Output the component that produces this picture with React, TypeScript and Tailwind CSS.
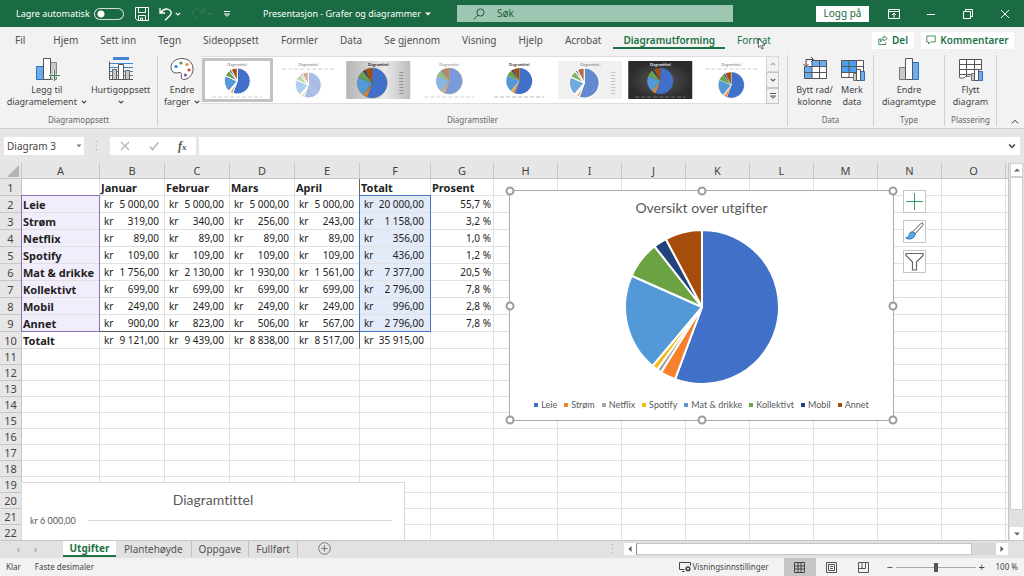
import type { ReactNode } from "react";
import clsx from "clsx";

const SLICES = [
  { name: "Leie", value: 20000, color: "#4170c8" },
  { name: "Strøm", value: 1158, color: "#f5812c" },
  { name: "Netflix", value: 356, color: "#a5a5a5" },
  { name: "Spotify", value: 436, color: "#f4bc10" },
  { name: "Mat & drikke", value: 7377, color: "#5399d8" },
  { name: "Kollektivt", value: 2796, color: "#6ba342" },
  { name: "Mobil", value: 996, color: "#24427a" },
  { name: "Annet", value: 2796, color: "#a74d0c" },
];

const COLUMNS = "ABCDEFGHIJKLMNO".split("");

const ROWS: string[][] = [
  ["", "Januar", "Februar", "Mars", "April", "Totalt", "Prosent"],
  ["Leie", "5 000,00", "5 000,00", "5 000,00", "5 000,00", "20 000,00", "55,7 %"],
  ["Strøm", "319,00", "340,00", "256,00", "243,00", "1 158,00", "3,2 %"],
  ["Netflix", "89,00", "89,00", "89,00", "89,00", "356,00", "1,0 %"],
  ["Spotify", "109,00", "109,00", "109,00", "109,00", "436,00", "1,2 %"],
  ["Mat & drikke", "1 756,00", "2 130,00", "1 930,00", "1 561,00", "7 377,00", "20,5 %"],
  ["Kollektivt", "699,00", "699,00", "699,00", "699,00", "2 796,00", "7,8 %"],
  ["Mobil", "249,00", "249,00", "249,00", "249,00", "996,00", "2,8 %"],
  ["Annet", "900,00", "823,00", "506,00", "567,00", "2 796,00", "7,8 %"],
  ["Totalt", "9 121,00", "9 439,00", "8 838,00", "8 517,00", "35 915,00", ""],
];

const TABS = [
  "Fil", "Hjem", "Sett inn", "Tegn", "Sideoppsett", "Formler", "Data",
  "Se gjennom", "Visning", "Hjelp", "Acrobat", "Diagramutforming", "Format",
];

type PieProps = {
  cx: number;
  cy: number;
  r: number;
  gap: string;
  gapWidth: number;
  opacity?: number;
};

function Pie({ cx, cy, r, gap, gapWidth, opacity = 1 }: PieProps) {
  const total = SLICES.reduce((sum, s) => sum + s.value, 0);
  let angle = -Math.PI / 2;
  return (
    <g opacity={opacity} stroke={gap} strokeWidth={gapWidth} strokeLinejoin="round">
      {SLICES.map((s) => {
        const end = angle + (s.value / total) * Math.PI * 2;
        const large = end - angle > Math.PI ? 1 : 0;
        const d = `M${cx} ${cy}L${cx + r * Math.cos(angle)} ${cy + r * Math.sin(angle)}A${r} ${r} 0 ${large} 1 ${cx + r * Math.cos(end)} ${cy + r * Math.sin(end)}Z`;
        angle = end;
        return <path key={s.name} d={d} fill={s.color} />;
      })}
    </g>
  );
}

function Chevron({ className }: { className?: string }) {
  return (
    <svg viewBox="0 0 6 4" className={clsx("inline-block h-1 w-1.5", className)} fill="none" stroke="currentColor" strokeWidth="1.2">
      <path d="M.8.8 3 3 5.2.8" />
    </svg>
  );
}

function TitleBar() {
  return (
    <header className="flex h-[27px] shrink-0 items-center bg-[#1a6b43] text-[10px] text-white">
      <div className="flex w-[457px] shrink-0 items-center pl-4">
        <label htmlFor="autosave" className="w-[78px] whitespace-nowrap text-[9px]">Lagre automatisk</label>
        <input
          id="autosave"
          type="checkbox"
          className="h-3 w-[30px] appearance-none rounded-full border border-white/80 bg-[radial-gradient(circle_at_6px_5px,white_3px,transparent_4px)]"
        />
        <button aria-label="Lagre" className="ml-[11px]">
          <svg viewBox="0 0 14 14" className="h-3.5 w-3.5" fill="none" stroke="currentColor">
            <path d="M.5.5h13v13h-11l-2-2zM3.5.5v5h7v-5M3.5 13.5v-5h7v5M5.5 13.5v-2.500h2v2.500" />
          </svg>
        </button>
        <button aria-label="Angre" className="ml-2.5">
          <svg viewBox="0 0 14 14" className="h-3.5 w-3.5" fill="none" stroke="currentColor" strokeWidth="1.3">
            <path d="M1 1v5h5M1.300 5.800C4 2.500 7 1.300 9.800 2.500c2.700 1.200 3 4 1.200 6L6 13.300" />
          </svg>
        </button>
        <Chevron className="ml-0.5" />
        <button aria-label="Gjør om" className="ml-2.5 text-[#3a7f58]">
          <svg viewBox="0 0 14 14" className="h-3.5 w-3.5" fill="none" stroke="currentColor">
            <path d="M13 1v5H8M12.700 5.800C10 2.500 7 1.300 4.200 2.500 1.500 3.700 1.200 6.500 3 8.500l4 4" />
          </svg>
        </button>
        <Chevron className="ml-0.5 text-[#3a7f58]" />
        <button aria-label="Tilpass" className="ml-2.5">
          <svg viewBox="0 0 8 8" className="h-2 w-2" fill="none" stroke="currentColor">
            <path d="M1 1.500h6M1.500 4h5L4 6.300z" />
          </svg>
        </button>
        <h1 className="ml-8 whitespace-nowrap text-[9px]">Presentasjon - Grafer og diagrammer</h1>
        <svg viewBox="0 0 6 4" className="ml-1 h-1 w-1.5" fill="currentColor">
          <path d="M0 .5h6L3 3.500z" />
        </svg>
      </div>
      <div className="flex h-[17px] w-[276px] items-center bg-[#9dc7b2] pl-4 text-[#1a5c3a]">
        <svg viewBox="0 0 12 12" className="h-3 w-3" fill="none" stroke="currentColor">
          <circle cx="7.500" cy="4.500" r="3.600" />
          <path d="M5 7.200.8 11.400" />
        </svg>
        <input aria-label="Søk" placeholder="Søk" className="ml-3 min-w-0 flex-1 bg-transparent outline-none placeholder:text-[#1f5f3e]" />
      </div>
      <div className="ml-auto flex items-center">
        <button className="h-4 w-[53px] bg-white text-[#1a6b43]">Logg på</button>
        <button aria-label="Båndvisning" className="ml-[19px]">
          <svg viewBox="0 0 12 10" className="h-2.5 w-3" fill="none" stroke="currentColor">
            <path d="M.5.5h11v9H.5zM.5 2.500h11M6 8.500V4.300M4 6l2-2 2 2" />
          </svg>
        </button>
        <button aria-label="Minimer" className="ml-[26px]">
          <svg viewBox="0 0 10 10" className="h-2.5 w-2.5" stroke="currentColor"><path d="M1 5.500h8" /></svg>
        </button>
        <button aria-label="Gjenopprett" className="ml-[27px]">
          <svg viewBox="0 0 10 10" className="h-2.5 w-2.5" fill="none" stroke="currentColor">
            <path d="M.5 2.500h7v7h-7zM2.500 2.500v-2h7v7h-2" />
          </svg>
        </button>
        <button aria-label="Lukk" className="ml-[27px] mr-3.5">
          <svg viewBox="0 0 10 10" className="h-2.5 w-2.5" stroke="currentColor"><path d="m1 1 8 8M9 1 1 9" /></svg>
        </button>
      </div>
    </header>
  );
}

function RibbonTabs() {
  return (
    <nav className="flex h-[26px] shrink-0 items-center pl-[15px] text-[10px] text-[#505050]">
      <div className="flex h-full gap-[22px]">
        {TABS.map((tab) => (
          <button
            key={tab}
            className={clsx(
              "relative flex h-full items-center whitespace-nowrap",
              tab === "Fil" && "mr-1.5",
              tab === "Diagramutforming" && "font-semibold text-[#217346]",
              tab === "Format" && "text-[#217346]"
            )}
          >
            {tab}
            {tab === "Diagramutforming" && <span className="absolute -inset-x-2.5 bottom-1 h-0.5 bg-[#217346]" />}
            {tab === "Format" && (
              <svg viewBox="0 0 8 12" className="absolute left-[21px] top-[11px] h-3 w-2" fill="white" stroke="#444" strokeWidth=".8">
                <path d="M.5.5v9l2-1.800 1.400 3.300 1.400-.6L4 7.200h3z" />
              </svg>
            )}
          </button>
        ))}
      </div>
      <div className="ml-auto mr-2.5 flex gap-[7px] font-semibold text-[#217346]">
        <button className="flex h-[17px] w-[42px] items-center justify-center gap-1 bg-white">
          <svg viewBox="0 0 10 10" className="h-2.5 w-2.5" fill="none" stroke="currentColor" strokeWidth=".8">
            <path d="M3 4H.8v5.500h7V7.300M6 1l3.300 2.500L6 6V4.600C4 4.600 3 5.400 2.600 7 2.600 4.300 3.800 2.700 6 2.500z" />
          </svg>
          Del
        </button>
        <button className="flex h-[17px] w-[93px] items-center justify-center gap-1 bg-white">
          <svg viewBox="0 0 10 10" className="h-2.5 w-2.5" fill="none" stroke="currentColor" strokeWidth=".8">
            <path d="M.8 1h8.400v6H4.500L2.500 9V7H.8z" />
          </svg>
          Kommentarer
        </button>
      </div>
    </nav>
  );
}

function Group({ label, className, children }: { label: string; className?: string; children: ReactNode }) {
  return (
    <section className={clsx("flex flex-col border-r border-[#d0d0d0]", className)}>
      <div className="flex flex-1 items-start justify-center">{children}</div>
      <h2 className="h-3 text-center text-[8px] leading-3 text-[#666]">{label}</h2>
    </section>
  );
}

function BigButton({ icon, lines, menu, className }: { icon: ReactNode; lines: string[]; menu?: boolean; className?: string }) {
  return (
    <button className={clsx("flex shrink-0 flex-col items-center pt-px text-[9px] leading-3 whitespace-nowrap text-[#444]", className)}>
      <svg viewBox="0 0 26 26" className="mb-0.5 h-[26px] w-[26px]" fill="none">{icon}</svg>
      {lines.map((line, i) => (
        <span key={i} className="flex h-3 items-center">
          {line}
          {menu && i === lines.length - 1 && <Chevron className={line ? "ml-1" : ""} />}
        </span>
      ))}
    </button>
  );
}

const barsIcon = (
  <g strokeWidth="1">
    <path d="M3.500 11.500h6v12h-6z" fill="#c8c8c8" stroke="#777" />
    <path d="M16.500 6.500h6v17h-6z" fill="#6aaef0" stroke="#2d6fb5" />
    <path d="M9.500 2.500h7v21h-7z" fill="#fff" stroke="#555" />
  </g>
);

const addElementIcon = (
  <g>
    <path d="M2.500 10.500h7v13h-7z" fill="#6aaef0" stroke="#2d6fb5" />
    <path d="M16.500 6.500h6v17h-6z" fill="#c8c8c8" stroke="#888" />
    <path d="M9.500 2.500h7v21h-7z" fill="#fff" stroke="#555" />
    <path d="M20 14v11M14.500 19.500h11" stroke="#f1f1f1" strokeWidth="2" />
    <path d="M20.500 14v11M15 19.500h11" stroke="#2e8b57" />
  </g>
);

const quickLayoutIcon = (
  <g>
    <path d="M5 1h16v3H5z" fill="#3f87d0" />
    <path d="M1 7.500h24M1 11.500h24M1 15.500h24M1 19.500h24" stroke="#3f87d0" />
    <path d="M4.500 13.500h4v10h-4z" fill="#c8c8c8" stroke="#666" />
    <path d="M10.500 8.500h5v15h-5z" fill="#fff" stroke="#555" />
    <path d="M17.500 14.500h4v9h-4z" fill="#c8c8c8" stroke="#666" />
    <path d="M1.500 5.500v18H25" stroke="#555" />
  </g>
);

const paletteIcon = (
  <g>
    <path
      d="M13 2.500C6.500 2.500 2 6.500 2 11.500c0 3.500 2.500 5.500 5 5.500 2.200 0 4-1.300 5.200.2 1.200 1.600-.6 3.200.2 5 .7 1.500 3.300 1.700 5.600.5 3.800-1.900 6-5.700 6-9.700C24 6.500 19 2.500 13 2.500Z"
      fill="#fff"
      stroke="#555"
    />
    <circle cx="7" cy="10.500" r="1.600" fill="#2f7fd4" />
    <circle cx="12" cy="7" r="1.600" fill="#4a9a4a" />
    <circle cx="18" cy="8.500" r="1.600" fill="#ea8a2e" />
    <circle cx="20" cy="14" r="1.600" fill="#d8402f" />
    <circle cx="16.500" cy="19" r="1.600" fill="#8a4fb5" />
  </g>
);

const switchIcon = (
  <g>
    <path d="M2.500 4.500h22v18h-22z" fill="#fff" />
    <path d="M10 4.500h14.500v6H10zM2.500 10.500H10v12H2.500z" fill="#6aaef0" />
    <path d="M10 4.500h14.500v18h-22v-12H24.500M2.500 16.500h22M10 4.500v18M17.500 4.500v18" stroke="#555" />
    <path d="M4 10.500V3.500h7" stroke="#f1f1f1" strokeWidth="3" />
    <path d="M4 10.500V3.500h7M9 1l2.500 2.500L9 6M1.500 8 4 10.500 6.500 8" stroke="#444" />
  </g>
);

const selectDataIcon = (
  <g>
    <path d="M2.500 4.500h22v17h-22z" fill="#fff" />
    <path d="M2.500 4.500h15v12h-15z" fill="#4d9df0" />
    <path d="M2.500 4.500h22v17h-22zM2.500 10.500h22M2.500 16.500h22M10 4.500v17M17.500 4.500v17" stroke="#555" />
    <path d="M14.500 17.500h4v7h-4z" fill="#c8c8c8" stroke="#777" />
    <path d="M21.500 15.500h4v9h-4z" fill="#6aaef0" stroke="#2d6fb5" />
    <path d="M17.500 13.500h4v11h-4z" fill="#fff" stroke="#555" />
  </g>
);

const moveChartIcon = (
  <g>
    <path d="M2.500 3.500h22v19H8l-5.500-1z" fill="#fff" />
    <path d="M24.500 14v-10.500h-22v18c2 1 5 1 6-1l5-.3M2.500 8.500h22M2.500 13.500h22M2.500 18.500h12M9.500 3.500v17M17.500 3.500v10" stroke="#555" />
    <path d="M14.500 17.500h4v7h-4z" fill="#c8c8c8" stroke="#777" />
    <path d="M21.500 15.500h4v9h-4z" fill="#6aaef0" stroke="#2d6fb5" />
    <path d="M17.500 13.500h4v11h-4z" fill="#fff" stroke="#555" />
  </g>
);

type ThumbStyle = {
  bg: string;
  ink: string;
  cx: number;
  cy: number;
  r: number;
  gap: string;
  gapWidth: number;
  opacity?: number;
  bold?: boolean;
  legend: "bottom" | "top" | "right";
};

const THUMBS: ThumbStyle[] = [
  { bg: "#fff", ink: "#777", cx: 32, cy: 20, r: 13, gap: "#fff", gapWidth: 1, legend: "bottom" },
  { bg: "#fff", ink: "#777", cx: 32, cy: 24, r: 13, gap: "#fff", gapWidth: 1, opacity: 0.6, legend: "top" },
  { bg: "url(#silver)", ink: "#222", cx: 26, cy: 22, r: 15, gap: "#555", gapWidth: 0.3, bold: true, legend: "right" },
  { bg: "#fff", ink: "#888", cx: 32, cy: 20, r: 13, gap: "#777", gapWidth: 0.5, opacity: 0.7, legend: "bottom" },
  { bg: "#fff", ink: "#333", cx: 32, cy: 20, r: 13, gap: "#3a66b8", gapWidth: 0, bold: true, legend: "bottom" },
  { bg: "#f0f0f0", ink: "#777", cx: 26, cy: 22, r: 15, gap: "#fff", gapWidth: 1.2, opacity: 0.8, legend: "right" },
  { bg: "url(#coal)", ink: "#eee", cx: 32, cy: 20, r: 13, gap: "#2c58b0", gapWidth: 0, bold: true, legend: "bottom" },
  { bg: "#fff", ink: "#777", cx: 32, cy: 24, r: 13, gap: "#fff", gapWidth: 0.3, legend: "top" },
];

const LEGEND_LINES = {
  bottom: "M7 36h50",
  top: "M6 8h54",
  right: "M55 11v22",
};

function StyleThumb({ t, index }: { t: ThumbStyle; index: number }) {
  return (
    <button
      aria-label={`Stil ${index + 1}`}
      className={clsx("h-11 min-w-0 flex-1 border-[3px]", index === 0 ? "border-[#c3c3c3]" : "border-transparent")}
    >
      <svg viewBox="0 0 64 38" className="h-full w-full">
        <rect width="64" height="39" fill={t.bg} />
        <text
          x="32"
          y="4.500"
          textAnchor="middle"
          fontSize="3.500"
          fontFamily="Lato, sans-serif"
          fontWeight={t.bold ? 700 : 400}
          fill={t.ink}
        >
          Diagramtittel
        </text>
        <Pie cx={t.cx} cy={t.cy} r={t.r} gap={t.gap} gapWidth={t.gapWidth} opacity={t.opacity} />
        <path
          d={LEGEND_LINES[t.legend]}
          stroke={t.ink}
          strokeWidth={t.legend === "right" ? 4 : 1}
          strokeDasharray={t.legend === "right" ? "1 2" : "4 2"}
          opacity=".35"
        />
        {index === 1 && <circle cx={t.cx} cy={t.cy} r={t.r} fill="url(#hatch)" />}
      </svg>
    </button>
  );
}

function Ribbon() {
  return (
    <div className="flex h-[76px] shrink-0 border-b border-[#cfcfcf] py-0.5">
      <svg className="absolute h-0 w-0">
        <defs>
          <linearGradient id="silver">
            <stop offset="0" stopColor="#b5b5b5" />
            <stop offset=".6" stopColor="#e8e8e8" />
            <stop offset="1" stopColor="#bdbdbd" />
          </linearGradient>
          <radialGradient id="coal">
            <stop offset="0" stopColor="#5a5a5a" />
            <stop offset="1" stopColor="#2b2b2b" />
          </radialGradient>
          <pattern id="hatch" width="2" height="2" patternUnits="userSpaceOnUse" patternTransform="rotate(45)">
            <path d="M0 0h2" stroke="#fff" strokeWidth="1.200" />
          </pattern>
        </defs>
      </svg>
      <Group label="Diagramoppsett" className="w-[158px]">
        <BigButton icon={addElementIcon} lines={["Legg til", "diagramelement"]} menu />
        <BigButton icon={quickLayoutIcon} lines={["Hurtigoppsett", ""]} menu className="ml-1" />
      </Group>
      <Group label="Diagramstiler" className="flex-1">
        <BigButton icon={paletteIcon} lines={["Endre", "farger"]} menu className="w-11 pl-1" />
        <div className="mt-px flex h-[48px] min-w-0 flex-1 items-center border-y border-[#dedede] bg-white">
          {THUMBS.map((t, i) => (
            <StyleThumb key={i} t={t} index={i} />
          ))}
        </div>
        <div className="mr-2 mt-px flex h-[48px] w-[13px] flex-col text-[#555]">
          <button aria-label="Forrige stiler" className="flex flex-1 items-center justify-center border border-[#d8d8d8] text-[#aaa]">
            <Chevron className="rotate-180" />
          </button>
          <button aria-label="Neste stiler" className="flex flex-1 items-center justify-center border border-[#c6c6c6]">
            <Chevron />
          </button>
          <button aria-label="Flere stiler" className="flex flex-1 items-center justify-center border border-[#c6c6c6]">
            <svg viewBox="0 0 8 8" className="h-2 w-2" fill="none" stroke="currentColor">
              <path d="M1 1.500h6M1.500 4h5L4 6.300z" />
            </svg>
          </button>
        </div>
      </Group>
      <Group label="Data" className="w-[86px]">
        <BigButton icon={switchIcon} lines={["Bytt rad/", "kolonne"]} />
        <BigButton icon={selectDataIcon} lines={["Merk", "data"]} className="ml-1.5" />
      </Group>
      <Group label="Type" className="w-[71px]">
        <BigButton icon={barsIcon} lines={["Endre", "diagramtype"]} />
      </Group>
      <Group label="Plassering" className="w-[52px]">
        <BigButton icon={moveChartIcon} lines={["Flytt", "diagram"]} />
      </Group>
      <button aria-label="Skjul båndet" className="flex w-[27px] items-end justify-center pb-0.5 pl-2 text-[#444]">
        <svg viewBox="0 0 8 5" className="h-[5px] w-2" fill="none" stroke="currentColor"><path d="m.8 4.300 3.200-3 3.200 3" /></svg>
      </button>
    </div>
  );
}

function FormulaBar() {
  return (
    <div className="flex h-[34px] shrink-0 items-start bg-[#e6e6e6] px-1 pt-2 text-[10px] text-[#444]">
      <div className="flex h-[18px] w-20 items-center bg-white pl-[3px]">
        <input aria-label="Navneboks" defaultValue="Diagram 3" className="min-w-0 flex-1 bg-transparent outline-none" />
        <button aria-label="Vis navn" className="px-0.5">
          <svg viewBox="0 0 6 4" className="h-1 w-1.5" fill="#777"><path d="M.5.5h5L3 3.200z" /></svg>
        </button>
      </div>
      <svg viewBox="0 0 2 10" className="mx-3 mt-1 h-2.5 w-0.5 fill-[#aaa]">
        <path d="M0 0h1v1H0zM0 4h1v1H0zM0 8h1v1H0z" />
      </svg>
      <div className="flex h-[18px] w-[86px] items-center justify-around bg-white text-[#b5b5b5]">
        <button aria-label="Avbryt">
          <svg viewBox="0 0 10 10" className="h-2.5 w-2.5" stroke="currentColor" strokeWidth="1.200"><path d="m1 1 8 8M9 1 1 9" /></svg>
        </button>
        <button aria-label="Angi">
          <svg viewBox="0 0 10 10" className="h-2.5 w-2.5" fill="none" stroke="currentColor" strokeWidth="1.500"><path d="m.8 5.500 2.700 3L9.300 1.500" /></svg>
        </button>
        <button aria-label="Sett inn funksjon" className="font-['Liberation_Serif',serif] text-xs font-bold italic text-[#555]">
          f<span className="text-[9px]">x</span>
        </button>
      </div>
      <div className="ml-[3px] flex h-[18px] flex-1 items-center bg-white pr-1">
        <input aria-label="Formellinje" className="min-w-0 flex-1 bg-transparent outline-none" />
        <Chevron className="h-1.5 w-2 text-[#555]" />
      </div>
    </div>
  );
}

function Cell({ value, row, col }: { value: string; row: number; col: number }) {
  const money = row > 0 && row < 10 && col > 0 && col < 6;
  const bold = row === 0 || (col === 0 && row < 10);
  return (
    <td
      className={clsx(
        "overflow-hidden border-r border-b p-0 whitespace-nowrap",
        row === 8 && col < 6 ? "border-b-[#555]" : "border-b-[#e1e1e1]",
        col === 4 && row < 10 ? "border-r-[#666]" : "border-r-[#e1e1e1]",
        bold && "pl-px text-[11px] font-bold",
        row > 0 && row < 9 && col === 0 && "bg-[#f2edfa]",
        row > 0 && row < 9 && col === 5 && "bg-[#e3ebf9]",
        col === 6 && row > 0 && "pr-[2px] text-right"
      )}
    >
      {money ? (
        <span className={clsx("flex justify-between pl-1", col === 5 ? "pr-1.5" : "pr-[5px]")}>
          <span>kr</span>
          <span>{value}</span>
        </span>
      ) : (
        value
      )}
    </td>
  );
}

function Handles() {
  const spots = [
    "left-0 top-0", "left-1/2 top-0", "left-full top-0",
    "left-0 top-1/2", "left-full top-1/2",
    "left-0 top-full", "left-1/2 top-full", "left-full top-full",
  ];
  return (
    <>
      {spots.map((s) => (
        <span key={s} className={clsx("absolute h-[9px] w-[9px] -translate-1/2 rounded-full border-2 border-[#9c9c9c] bg-white", s)} />
      ))}
    </>
  );
}

function PieChart() {
  return (
    <figure className="absolute left-[509px] top-[27px] flex h-[231px] w-[385px] flex-col items-center border border-[#ababab] bg-white text-[#595959]">
      <figcaption className="mt-[7px] text-[14px] leading-5 [font-variant-ligatures:none]">Oversikt over utgifter</figcaption>
      <svg viewBox="0 0 156 156" className="mt-[11px] h-[156px] w-[156px]">
        <Pie cx={78} cy={78} r={77} gap="#fff" gapWidth={2} />
      </svg>
      <ul className="mt-3.5 flex gap-[7px] text-[9px] leading-3">
        {SLICES.map((s) => (
          <li key={s.name} className="flex items-center gap-[3px] whitespace-nowrap">
            <svg viewBox="0 0 4 4" className="h-1 w-1"><rect width="4" height="4" fill={s.color} /></svg>
            {s.name}
          </li>
        ))}
      </ul>
      <Handles />
    </figure>
  );
}

function ChartTools() {
  const box = "flex h-[23px] w-[23px] items-center justify-center border border-[#c6c6c6] bg-white";
  return (
    <div className="absolute left-[903px] top-[27px] flex flex-col gap-[7px]">
      <button aria-label="Diagramelementer" className={box}>
        <svg viewBox="0 0 19 19" className="h-[19px] w-[19px]" stroke="#3a9a68"><path d="M9.500 1v17M1 9.500h17" /></svg>
      </button>
      <button aria-label="Diagramstiler" className={box}>
        <svg viewBox="0 0 19 19" className="h-[19px] w-[19px]">
          <path d="M17.800 1.200c-.8-.6-1.700 0-2.300.6L8 9.500l2.200 2.300 7.300-8.200c.6-.7 1-1.700.3-2.400Z" fill="#fff" stroke="#555" />
          <path d="M7.800 9.800c-2.600-.2-3.300 1.500-3.600 3C3.900 14.600 2.800 15.500.8 15.800c2.300 2 8.500 2 9.400-3.800z" fill="#5aa7e8" stroke="#2277bd" />
        </svg>
      </button>
      <button aria-label="Diagramfiltre" className={box}>
        <svg viewBox="0 0 19 19" className="h-[19px] w-[19px]" fill="none" stroke="#666" strokeWidth="1.200">
          <path d="M1 1.500h17v2l-6.500 6.500v8h-4v-8L1 3.500z" />
        </svg>
      </button>
    </div>
  );
}

function LineChart() {
  return (
    <figure className="absolute left-[21px] top-[319px] h-[120px] w-[384px] border border-[#d9d9d9] bg-white text-[#595959]">
      <figcaption className="mt-[7px] text-center text-[14px] leading-5 [font-variant-ligatures:none]">Diagramtittel</figcaption>
      <div className="mt-1 flex items-center gap-3 pl-2 pr-3 text-[9px]">
        <span>kr 6 000,00</span>
        <span className="h-px flex-1 bg-[#d9d9d9]" />
      </div>
    </figure>
  );
}

function Sheet() {
  return (
    <div className="flex min-h-0 flex-1 bg-[#e6e6e6]">
      <div className="relative min-w-0 flex-1 overflow-hidden border-r border-[#c6c6c6] bg-white font-[Lato,sans-serif]">
        <table className="w-full table-fixed border-separate border-spacing-0 font-['Noto_Sans',sans-serif] text-[10px] leading-[15px] text-[#222]">
          <colgroup>
            <col className="w-[22px]" />
            <col className="w-[78px]" />
            <col className="w-[65px]" />
            <col className="w-[65px]" />
            <col className="w-[65px]" />
            <col className="w-[65px]" />
            <col className="w-[71px]" />
            <col className="w-[63px]" />
            {COLUMNS.slice(7).map((c) => (
              <col key={c} className="w-16" />
            ))}
            <col />
          </colgroup>
          <thead>
            <tr className="h-4 bg-[#e6e6e6] text-[11px] text-[#444]">
              <th className="border-r border-b border-[#c6c6c6] p-0">
                <svg viewBox="0 0 12 12" className="ml-auto mr-0.5 h-3 w-3" fill="#b4b4b4"><path d="M12 0v12H0z" /></svg>
              </th>
              {COLUMNS.map((c) => (
                <th key={c} className="border-r border-b border-[#c6c6c6] p-0 font-normal">{c}</th>
              ))}
              <th className="border-b border-[#c6c6c6] p-0" />
            </tr>
          </thead>
          <tbody>
            {Array.from({ length: 22 }, (_, r) => (
              <tr key={r} className={r < 10 ? "h-[17px]" : "h-4"}>
                <th className="border-r border-b border-[#c6c6c6] bg-[#e6e6e6] p-0 text-[11px] font-normal text-[#444]">{r + 1}</th>
                {COLUMNS.map((c, i) => (
                  <Cell key={c} value={ROWS[r]?.[i] ?? ""} row={r} col={i} />
                ))}
                <td className="border-b border-[#e1e1e1] p-0" />
              </tr>
            ))}
          </tbody>
        </table>
        {/* source ranges of the selected chart */}
        <div className="absolute left-[21px] top-[32px] h-[137px] w-[79px] border border-[#8b6fb8]" />
        <div className="absolute left-[359px] top-[32px] h-[137px] w-[72px] border border-[#4472c4]" />
        <LineChart />
        <PieChart />
        <ChartTools />
      </div>
      <div className="flex w-[15px] flex-col items-center bg-[#e0e0e0]">
        <button aria-label="Rull opp" className="flex h-[14px] w-[13px] items-center justify-center border border-[#d0d0d0] bg-white">
          <svg viewBox="0 0 6 4" className="h-1 w-1.5" fill="#666"><path d="M0 3.500h6L3 .5z" /></svg>
        </button>
        <div className="h-[333px] w-[13px] border border-[#d0d0d0] bg-white" />
        <button aria-label="Rull ned" className="mt-auto flex h-[13px] w-[13px] items-center justify-center bg-white">
          <svg viewBox="0 0 6 4" className="h-1 w-1.5" fill="#666"><path d="M0 .5h6L3 3.500z" /></svg>
        </button>
      </div>
    </div>
  );
}

function SheetTabs() {
  return (
    <div className="flex h-[18px] shrink-0 items-start border-t border-[#c6c6c6] bg-[#e2e2e2] text-[10px] text-[#555]">
      <div className="flex h-full w-[63px] items-center gap-3.5 pl-4 text-[#b5b5b5]">
        <svg viewBox="0 0 4 6" className="h-1.5 w-1" fill="currentColor"><path d="M3.500 0v6L.5 3z" /></svg>
        <svg viewBox="0 0 4 6" className="h-1.5 w-1" fill="currentColor"><path d="M.5 0v6l3-3z" /></svg>
      </div>
      <button className="h-4 w-[53px] border-b-2 border-[#217346] bg-white font-bold leading-[14px] text-[#217346]">Utgifter</button>
      <button className="h-4 border-r border-[#c0c0c0] px-2 leading-[14px]">Plantehøyde</button>
      <button className="h-4 border-r border-[#c0c0c0] px-[7px] leading-[14px]">Oppgave</button>
      <button className="h-4 border-r border-[#c0c0c0] px-[7px] leading-[14px]">Fullført</button>
      <button aria-label="Nytt ark" className="ml-5 mt-px">
        <svg viewBox="0 0 13 13" className="h-[13px] w-[13px]" fill="none" stroke="#777">
          <circle cx="6.500" cy="6.500" r="5.800" />
          <path d="M6.500 3.500v6M3.500 6.500h6" />
        </svg>
      </button>
      <div className="ml-auto flex h-4 items-center">
        <svg viewBox="0 0 2 10" className="mr-2.5 h-2.5 w-0.5 fill-[#aaa]">
          <path d="M0 0h1v1H0zM0 4h1v1H0zM0 8h1v1H0z" />
        </svg>
        <button aria-label="Rull til venstre" className="flex h-3 w-3 items-center justify-center bg-white">
          <svg viewBox="0 0 4 6" className="h-1.5 w-1" fill="#555"><path d="M3.500 0v6L.5 3z" /></svg>
        </button>
        <div className="flex h-3 w-[360px] bg-[#d8d8d8]">
          <div className="w-[336px] border border-[#c6c6c6] border-l-[#888] bg-white" />
        </div>
        <button aria-label="Rull til høyre" className="mr-4 flex h-3 w-3 items-center justify-center bg-white">
          <svg viewBox="0 0 4 6" className="h-1.5 w-1" fill="#555"><path d="M.5 0v6l3-3z" /></svg>
        </button>
      </div>
    </div>
  );
}

function StatusBar() {
  return (
    <footer className="flex h-[18px] shrink-0 items-center px-1.5 text-[8px] text-[#444]">
      <span>Klar</span>
      <span className="ml-3.5">Faste desimaler</span>
      <button className="ml-auto flex items-center gap-0.5">
        <svg viewBox="0 0 12 10" className="h-2.5 w-3" fill="none" stroke="currentColor">
          <path d="M5.500 7.500h-5v-7h11v3M3 9.500h2.500" />
          <circle cx="9" cy="6.800" r="1.800" strokeWidth="1.600" />
        </svg>
        Visningsinnstillinger
      </button>
      <button aria-label="Normal" className="ml-[15px] flex h-[18px] w-8 items-center justify-center bg-[#c6c6c6]">
        <svg viewBox="0 0 11 11" className="h-[11px] w-[11px]" fill="none" stroke="#444">
          <path d="M.5.5h10v10H.5zM.5 4h10M.5 7h10M4 .5v10M7 .5v10" />
        </svg>
      </button>
      <button aria-label="Sideoppsett" className="flex w-8 justify-center">
        <svg viewBox="0 0 11 11" className="h-[11px] w-[11px]" fill="none" stroke="#555">
          <path d="M.5.5h10v10H.5zM2.500 2.500h6v6h-6zM4 4.500h3M4 6.500h3" />
        </svg>
      </button>
      <button aria-label="Sideskift" className="flex w-8 justify-center">
        <svg viewBox="0 0 11 11" className="h-[11px] w-[11px]" fill="none" stroke="#555">
          <path d="M.5.5h10v10H.5zM.5 6.500h7v-6M4 .5v6" />
        </svg>
      </button>
      <button aria-label="Zoom ut" className="ml-1 w-3 text-[11px] leading-3">−</button>
      <input
        aria-label="Zoom"
        type="range"
        defaultValue={50}
        className="h-2.5 w-20 appearance-none bg-[linear-gradient(#aaa,#aaa)] bg-[length:100%_1px] bg-center bg-no-repeat [&::-webkit-slider-thumb]:h-[9px] [&::-webkit-slider-thumb]:w-1 [&::-webkit-slider-thumb]:appearance-none [&::-webkit-slider-thumb]:bg-[#555]"
      />
      <button aria-label="Zoom inn" className="w-3 text-[11px] leading-3">+</button>
      <span className="ml-2 whitespace-nowrap">100 %</span>
    </footer>
  );
}

export default function App() {
  return (
    <div className="relative flex h-screen flex-col overflow-hidden bg-[#f2f2f2] font-['Noto_Sans',sans-serif]">
      <TitleBar />
      <RibbonTabs />
      <Ribbon />
      <FormulaBar />
      <Sheet />
      <SheetTabs />
      <StatusBar />
    </div>
  );
}
